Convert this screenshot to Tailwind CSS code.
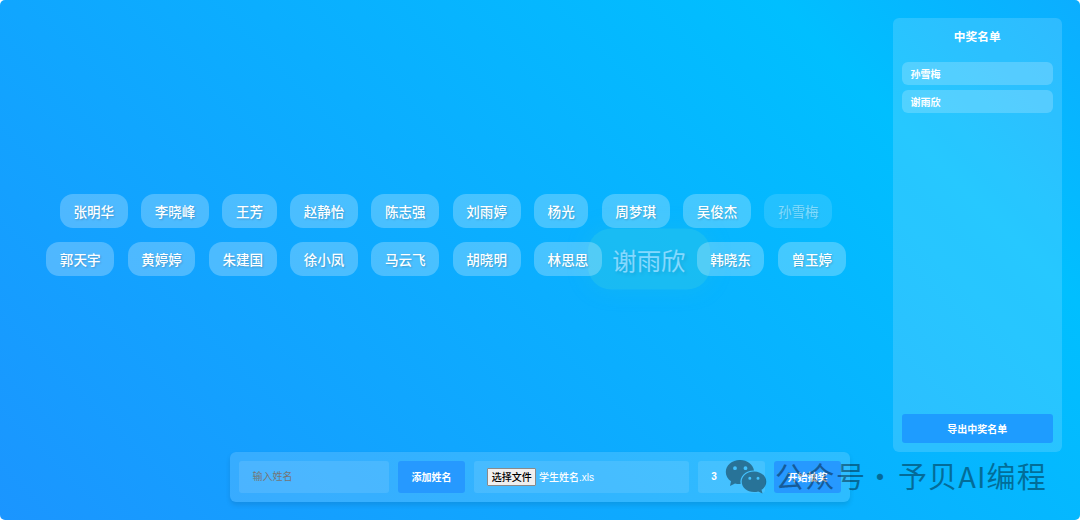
<!DOCTYPE html>
<html lang="zh-CN">
<head>
<meta charset="utf-8">
<title>抽奖</title>
<script src="https://cdn.jsdelivr.net/npm/@tailwindcss/browser@4"></script>
</head>
<body class="bg-white">
<div class="relative h-[520px] w-[1080px] overflow-hidden rounded-[5px] bg-[linear-gradient(45deg,#1b95ff_0%,#00bfff_81%,#0caeff_100%)] font-['Liberation_Sans','Noto_Sans_CJK_SC',sans-serif] text-white">
  <main class="isolate flex h-full w-[892px] flex-col items-center gap-[13.7px] pt-[194px] text-[13.55px] font-medium leading-[34px] [text-shadow:1px_1px_2px_rgba(0,0,0,0.2)]">
    <div class="flex gap-[13.55px] *:h-[34px] *:rounded-[13px] *:bg-white/25 *:px-[13.55px] *:pt-[1.5px]">
      <span>张明华</span>
      <span>李晓峰</span>
      <span>王芳</span>
      <span>赵静怡</span>
      <span>陈志强</span>
      <span>刘雨婷</span>
      <span>杨光</span>
      <span>周梦琪</span>
      <span>吴俊杰</span>
      <span class="font-normal opacity-50">孙雪梅</span>
    </div>
    <div class="flex gap-[13.55px] *:h-[34px] *:rounded-[13px] *:px-[13.55px] *:pt-[2px]">
      <span class="bg-white/25">郭天宇</span>
      <span class="bg-white/25">黄婷婷</span>
      <span class="bg-white/25">朱建国</span>
      <span class="bg-white/25">徐小凤</span>
      <span class="bg-white/25">马云飞</span>
      <span class="bg-white/25">胡晓明</span>
      <span class="bg-white/25">林思思</span>
      <span class="relative -z-10 scale-[1.8] bg-[#2fc8e6]/90 font-normal opacity-50 shadow-[0_0_11px_rgba(47,200,216,0.4)]"><span class="relative -top-[0.5px]">谢雨欣</span></span>
      <span class="bg-white/25">韩晓东</span>
      <span class="bg-white/25">曾玉婷</span>
    </div>
  </main>

  <aside class="absolute left-[892.5px] top-[18px] flex h-[433.5px] w-[169.5px] flex-col rounded-[6px] bg-white/15 p-[9px]">
    <h2 class="mb-[16px] pt-px text-center text-[11.7px] font-bold leading-[18px]">中奖名单</h2>
    <ul class="flex flex-1 flex-col gap-[4.5px] text-[10px] font-bold leading-[23.3px]">
      <li class="h-[23.3px] rounded-[6px] bg-white/20 px-[9px] pt-px">孙雪梅</li>
      <li class="h-[23.3px] rounded-[6px] bg-white/20 px-[9px] pt-px">谢雨欣</li>
    </ul>
    <button class="h-[28.5px] rounded-[3px] bg-[#1e9cff] pt-[2px] text-[10px] font-bold">导出中奖名单</button>
  </aside>

  <div class="absolute left-[230px] top-[451.5px] flex h-[50.5px] w-[620px] gap-[9px] rounded-[6px] bg-white/15 p-[9px] text-[10px] font-medium shadow-[0_3px_5px_rgba(0,0,0,0.1)]">
    <div class="w-[150.5px] rounded-[3px] bg-white/10 px-[13.5px] leading-[31px] font-normal text-[#757575]">输入姓名</div>
    <button class="w-[67px] rounded-[3px] bg-[#2699ff] pt-[2px] font-bold">添加姓名</button>
    <div class="flex w-[215.5px] items-center gap-[3px] rounded-[3px] bg-white/10 px-[13.5px]">
      <span class="h-[17.5px] w-[48.5px] rounded-[1px] border border-[#8a8a8a] bg-[#efefef] text-center font-medium leading-[17px] text-black">选择文件</span>
      <span class="pt-[2px]">学生姓名.xls</span>
    </div>
    <div class="w-[67.5px] rounded-[3px] bg-white/10 px-[13.5px] leading-[31px] font-bold">3</div>
    <button class="w-[67px] rounded-[3px] bg-[#2699ff] pt-[2px] font-bold">开始抽奖</button>
  </div>

  <div class="absolute left-[725px] top-[459px] flex text-black opacity-40">
    <svg class="h-[36px] w-[42px]" viewBox="0 0 42 36" fill="currentColor">
      <path fill-rule="evenodd" d="M15 1C7 1 .8 6.300.8 13c0 3.900 2 7 5.200 9.200L5 27l5-2.600c1.700.5 3.500.7 5.600.6-1.400-7.500 5-13.600 13.400-13.500C28 5.300 22.200 1 15 1ZM10 7.300a1.900 1.900 0 1 1 0 3.800a1.900 1.900 0 1 1 0-3.800ZM20.500 7.300a1.900 1.900 0 1 1 0 3.800a1.900 1.900 0 1 1 0-3.800Z"/>
      <path fill-rule="evenodd" d="M29 12.500c-7 0-12.300 4.500-12.300 10.200S22 33 29 33c1.500 0 2.900-.2 4.200-.6l4.300 2.200-1-3.800c3-2 4.800-4.800 4.800-8.100 0-5.700-5.300-10.200-12.300-10.200ZM24.800 17.700a1.500 1.500 0 1 1 0 3a1.500 1.500 0 1 1 0-3ZM33 17.700a1.500 1.500 0 1 1 0 3a1.500 1.500 0 1 1 0-3Z"/>
    </svg>
    <div class="-mt-[2px] ml-[8px] flex whitespace-nowrap font-['Noto_Sans_CJK_SC',sans-serif] text-[29px] font-normal leading-[36px]">
      <span class="w-[90.5px] tracking-[1.5px]">公众号</span>
      <span class="w-[32.5px]">·</span>
      <span class="tracking-[1.1px]">予贝AI编程</span>
    </div>
  </div>
</div>
</body>
</html>
